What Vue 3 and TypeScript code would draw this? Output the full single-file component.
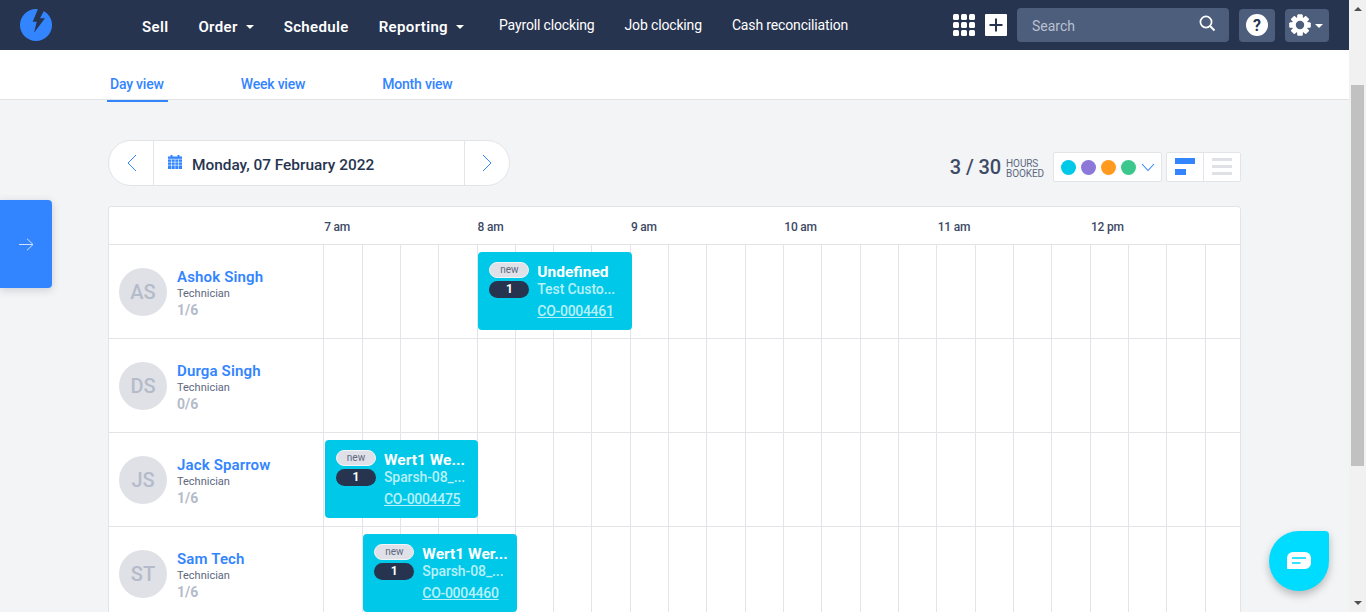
<script setup lang="ts">
interface NavItem { label: string; caret?: boolean }
interface Job { title: string; sub: string; code: string; slot: number }
interface Person { initials: string; name: string; count: string; job?: Job }

const mainNav: NavItem[] = [
  { label: 'Sell' },
  { label: 'Order', caret: true },
  { label: 'Schedule' },
  { label: 'Reporting', caret: true },
]
const subNav: string[] = ['Payroll clocking', 'Job clocking', 'Cash reconciliation']
const tabs: string[] = ['Day view', 'Week view', 'Month view']
const hours: string[] = ['7 am', '8 am', '9 am', '10 am', '11 am', '12 pm']
const legend: string[] = ['#00c8e8', '#8b78d8', '#ff9a1f', '#3cc88c']
const slots: number[] = Array.from({ length: 24 }, (_, i) => i)
const teeth: number[] = [0, 45, 90, 135, 180, 225, 270, 315]
const SLOT = 38.34

const people: Person[] = [
  { initials: 'AS', name: 'Ashok Singh', count: '1/6', job: { title: 'Undefined', sub: 'Test Custo...', code: 'CO-0004461', slot: 4 } },
  { initials: 'DS', name: 'Durga Singh', count: '0/6' },
  { initials: 'JS', name: 'Jack Sparrow', count: '1/6', job: { title: 'Wert1 We...', sub: 'Sparsh-08_...', code: 'CO-0004475', slot: 0 } },
  { initials: 'ST', name: 'Sam Tech', count: '1/6', job: { title: 'Wert1 Wer...', sub: 'Sparsh-08_...', code: 'CO-0004460', slot: 1 } },
]
const jobLeft = (slot: number): string => `${slot * SLOT + 1.8}px`
</script>

<template>
  <div class="app">
    <div class="page">
      <header class="topbar">
        <svg class="logo" width="32" height="32" viewBox="0 0 32 32">
          <circle cx="16" cy="16" r="16" fill="#3385ff" />
          <path d="M18.3 -1L12.7 12.7H16.7L14 23.7L25 9.3H20L25.5 -1Z" fill="#27344f" />
        </svg>
        <nav class="main-nav">
          <a v-for="item in mainNav" :key="item.label" class="main-link">
            {{ item.label }}<i v-if="item.caret" class="caret"></i>
          </a>
        </nav>
        <nav class="sub-nav">
          <a v-for="item in subNav" :key="item" class="sub-link">{{ item }}</a>
        </nav>
        <div class="top-tools">
          <svg width="22" height="22" viewBox="0 0 22 22" fill="#fff">
            <template v-for="r in [0, 1, 2]" :key="r">
              <rect v-for="c in [0, 1, 2]" :key="c" :x="c * 8" :y="r * 8" width="6" height="6" rx="1.5" />
            </template>
          </svg>
          <svg class="plus" width="22" height="22" viewBox="0 0 22 22">
            <rect width="22" height="22" rx="1" fill="#fff" />
            <path d="M11 4.5V17.5M4.5 11H17.5" stroke="#27344f" stroke-width="2" />
          </svg>
          <div class="search">
            <span>Search</span>
            <svg width="17" height="17" viewBox="0 0 17 17" fill="none" stroke="#fff" stroke-width="1.7">
              <circle cx="7" cy="7" r="5.6" />
              <path d="M11 11L15.5 15.5" stroke-width="2" />
            </svg>
          </div>
          <button class="tool-btn help">
            <svg width="22" height="22" viewBox="0 0 22 22">
              <circle cx="11" cy="11" r="11" fill="#fff" />
              <text x="11" y="16.5" text-anchor="middle" class="q">?</text>
            </svg>
          </button>
          <button class="tool-btn gear">
            <svg width="22" height="22" viewBox="0 0 24 24">
              <rect v-for="t in teeth" :key="t" x="9.2" y="0.5" width="5.6" height="23" rx="1" fill="#fff" :transform="`rotate(${t} 12 12)`" />
              <circle cx="12" cy="12" r="6.8" fill="none" stroke="#fff" stroke-width="4" />
              <circle cx="12" cy="12" r="4.6" fill="#4d5d7c" />
            </svg>
            <i class="caret small"></i>
          </button>
        </div>
      </header>

      <div class="tabs">
        <a v-for="(tab, i) in tabs" :key="tab" class="tab" :class="{ active: i === 0 }">{{ tab }}</a>
      </div>

      <main class="content">
        <div class="toolbar">
          <div class="date-pill">
            <button class="arrow">
              <svg width="11" height="18" viewBox="0 0 11 18" fill="none" stroke="#3385ff" stroke-width="1"><path d="M10 1L2 9L10 17" /></svg>
            </button>
            <div class="date">
              <svg width="14" height="14" viewBox="0 0 14 14">
                <rect y="1.5" width="14" height="12.5" fill="#3385ff" />
                <rect x="2.5" width="2" height="3" fill="#3385ff" />
                <rect x="9.5" width="2" height="3" fill="#3385ff" />
                <path d="M0 4.2H14M0 7.2H14M0 10.2H14M3.5 4.2V14M7 4.2V14M10.5 4.2V14" stroke="#fff" stroke-width="0.6" />
              </svg>
              <span>Monday, 07 February 2022</span>
            </div>
            <button class="arrow">
              <svg width="11" height="18" viewBox="0 0 11 18" fill="none" stroke="#3385ff" stroke-width="1"><path d="M1 1L9 9L1 17" /></svg>
            </button>
          </div>
          <div class="tools">
            <strong class="booked">3 / 30</strong>
            <span class="booked-label">HOURS<br />BOOKED</span>
            <div class="legend">
              <i v-for="c in legend" :key="c" class="dot" :style="{ background: c }"></i>
              <svg width="14" height="9" viewBox="0 0 14 9" fill="none" stroke="#3385ff" stroke-width="1.1"><path d="M1 1L7 7.5L13 1" /></svg>
            </div>
            <div class="view-toggle">
              <div class="view-btn">
                <svg width="20" height="18" viewBox="0 0 20 18" fill="#3385ff"><rect width="20" height="6" /><rect y="11" width="11" height="6" /></svg>
              </div>
              <div class="view-btn">
                <svg width="20" height="18" viewBox="0 0 20 18" fill="#e0e1e6"><rect width="20" height="3" /><rect y="7" width="20" height="3" /><rect y="14" width="20" height="3" /></svg>
              </div>
            </div>
          </div>
        </div>

        <section class="board">
          <div class="board-head">
            <div class="name-col"></div>
            <span v-for="h in hours" :key="h" class="hour">{{ h }}</span>
          </div>
          <div v-for="p in people" :key="p.initials" class="row">
            <div class="name-col person">
              <div class="avatar">{{ p.initials }}</div>
              <div class="who">
                <a class="who-name">{{ p.name }}</a>
                <span class="role">Technician</span>
                <span class="count">{{ p.count }}</span>
              </div>
            </div>
            <div class="timeline">
              <div v-for="s in slots" :key="s" class="slot"></div>
              <article v-if="p.job" class="job" :style="{ left: jobLeft(p.job.slot) }">
                <div class="pills">
                  <span class="pill-new">new</span>
                  <span class="pill-num">1</span>
                </div>
                <div class="job-text">
                  <span class="job-title">{{ p.job.title }}</span>
                  <span class="job-sub">{{ p.job.sub }}</span>
                  <a class="job-code">{{ p.job.code }}</a>
                </div>
              </article>
            </div>
          </div>
        </section>
      </main>

      <button class="side-toggle">
        <svg width="15" height="13" viewBox="0 0 15 13" fill="none" stroke="#cfe1ff" stroke-width="1"><path d="M0 6.5H14M8 0.7L14 6.5L8 12.3" /></svg>
      </button>
      <button class="chat">
        <svg width="24" height="18" viewBox="0 0 24 18">
          <path d="M6 0H18A6 6 0 0 1 24 6V11A6 6 0 0 1 18 17H1A1 1 0 0 1 0 16V6A6 6 0 0 1 6 0Z" fill="#fff" />
          <path d="M5 6H19" stroke="#00dcff" stroke-width="1.6" />
          <path d="M5 11H13.5" stroke="#00dcff" stroke-width="1.6" />
        </svg>
      </button>
    </div>

    <aside class="scrollbar">
      <i class="sb-up"></i>
      <div class="sb-track"><div class="sb-thumb"></div></div>
      <i class="sb-down"></i>
    </aside>
  </div>
</template>

<style>
html, body { margin: 0; overflow: hidden; }
</style>

<style scoped>
.app {
  display: flex;
  height: 612px;
  overflow: hidden;
  font-family: Roboto, "Liberation Sans", sans-serif;
  background: #f3f4f6;
  color: #27344f;
}
.page { flex: 1; min-width: 0; display: flex; flex-direction: column; position: relative; }
a { cursor: pointer; }
button { border: 0; padding: 0; font: inherit; }

.topbar {
  height: 50px;
  flex: none;
  background: #27344f;
  display: flex;
  align-items: center;
  padding: 0 20px;
  color: #fff;
}
.logo { flex: none; overflow: hidden; }
.main-nav { display: flex; margin-left: 90px; gap: 30px; }
.main-link { font-size: 15px; font-weight: 600; display: flex; align-items: center; letter-spacing: 0.35px; padding-top: 3px; }
.caret {
  width: 0; height: 0; margin-left: 8px; margin-top: 1px;
  border-left: 4px solid transparent;
  border-right: 4px solid transparent;
  border-top: 4px solid #fff;
}
.caret.small { margin-left: 4px; }
.sub-nav { display: flex; margin-left: 35px; gap: 30px; }
.sub-link { font-size: 14px; letter-spacing: -0.15px; color: #fff; margin-top: -1px; }
.top-tools { margin-left: auto; display: flex; align-items: center; }
.plus { margin-left: 10px; }
.search {
  margin-left: 10px;
  width: 212px;
  height: 34px;
  box-sizing: border-box;
  background: #4d5d7c;
  border-radius: 4px;
  display: flex;
  align-items: center;
  justify-content: space-between;
  padding: 0 13px 4px 15px;
  font-size: 14px;
  color: #b9c1d1;
}
.search span { margin-top: 5px; }
.tool-btn {
  height: 33px;
  background: #4d5d7c;
  border-radius: 4px;
  display: flex;
  align-items: center;
}
.help { width: 36px; margin-left: 10px; justify-content: center; }
.q { font: 700 16px Roboto, sans-serif; fill: #27344f; }
.gear { width: 44px; margin-left: 10px; padding-left: 4px; box-sizing: border-box; }

.tabs {
  height: 50px;
  flex: none;
  box-sizing: border-box;
  background: #fff;
  border-bottom: 1px solid #e3e4e8;
  display: flex;
  gap: 70px;
  padding-left: 107px;
}
.tab {
  height: 52px;
  box-sizing: border-box;
  padding: 26px 4px 0 3px;
  font-size: 14px;
  letter-spacing: -0.2px;
  font-weight: 500;
  color: #3385ff;
}
.tab.active { border-bottom: 2px solid #3385ff; }

.content { padding: 40px 108px 0; flex: 1; min-height: 0; }
.toolbar { display: flex; justify-content: space-between; align-items: flex-start; height: 46px; }
.date-pill {
  width: 402px;
  height: 46px;
  box-sizing: border-box;
  display: flex;
  background: #fff;
  border: 1px solid #e3e4e8;
  border-radius: 23px;
}
.arrow {
  width: 44px;
  flex: none;
  background: transparent;
  display: flex;
  align-items: center;
  justify-content: center;
}
.date {
  flex: 1;
  display: flex;
  align-items: center;
  gap: 10px;
  padding-left: 14px;
  border-left: 1px solid #e3e4e8;
  border-right: 1px solid #e3e4e8;
  font-size: 15.4px;
  font-weight: 500;
  color: #27344f;
}
.date span { padding-top: 3px; }
.date svg { margin-top: -2px; }
.tools { display: flex; align-items: center; height: 30px; margin-top: 12px; }
.booked { font-size: 20px; letter-spacing: -0.1px; font-weight: 500; color: #3d4a66; white-space: nowrap; }
.booked-label { font-size: 10px; letter-spacing: -0.1px; line-height: 10px; color: #5d6880; margin-left: 5px; padding-top: 3px; }
.legend {
  margin-left: 9px;
  width: 109px;
  height: 30px;
  box-sizing: border-box;
  background: #fff;
  border: 1px solid #e3e4e8;
  border-radius: 2px;
  display: flex;
  align-items: center;
  padding-left: 7px;
  gap: 5px;
}
.dot { width: 15px; height: 15px; border-radius: 50%; }
.view-toggle {
  margin-left: 4px;
  width: 75px;
  height: 30px;
  box-sizing: border-box;
  display: flex;
  background: #fff;
  border: 1px solid #e3e4e8;
  border-radius: 2px;
}
.view-btn { flex: 1; display: flex; align-items: center; justify-content: center; }
.view-btn + .view-btn { border-left: 1px solid #e3e4e8; }

.board {
  margin-top: 20px;
  background: #fff;
  border: 1px solid #e3e4e8;
  border-radius: 3px 3px 0 0;
  overflow: hidden;
}
.board-head { height: 37px; display: flex; align-items: center; }
.name-col { width: 214.2px; flex: none; box-sizing: border-box; }
.hour {
  width: 153.36px;
  flex: none;
  box-sizing: border-box;
  padding: 2px 0 0 1px;
  font-size: 12px;
  letter-spacing: -0.2px;
  font-weight: 500;
  color: #3d4a66;
}
.row { height: 94px; box-sizing: border-box; display: flex; border-top: 1px solid #e3e4e8; }
.person { display: flex; align-items: center; padding-left: 10px; gap: 10px; }
.avatar {
  width: 48px;
  height: 48px;
  flex: none;
  border-radius: 50%;
  background: #e0e1e6;
  color: #b4bbca;
  font-size: 20px;
  font-weight: 500;
  display: flex;
  align-items: center;
  justify-content: center;
}
.who { display: flex; flex-direction: column; padding-top: 4px; }
.who-name { font-size: 15px; font-weight: 600; color: #3385ff; line-height: 18px; letter-spacing: 0.15px; }
.role { font-size: 11px; color: #5d6880; line-height: 14px; margin-top: 1px; }
.count { font-size: 14px; font-weight: 700; color: #b4bbca; line-height: 18px; }
.timeline { flex: 1; display: flex; position: relative; min-width: 0; }
.slot { width: 38.34px; flex: none; box-sizing: border-box; border-left: 1px solid #e3e4e8; }
.job {
  position: absolute;
  top: 7px;
  width: 153.3px;
  height: 78px;
  box-sizing: border-box;
  padding: 10px 11px;
  display: flex;
  gap: 8px;
  background: #00c8e8;
  border-radius: 4px;
  color: #fff;
}
.pills { width: 40px; flex: none; display: flex; flex-direction: column; gap: 3px; }
.pill-new {
  height: 16px;
  box-sizing: border-box;
  border: 1px solid #f3f4f6;
  border-radius: 8px;
  background: #e0e1e8;
  color: #5d6880;
  font-size: 10px;
  line-height: 14px;
  text-align: center;
}
.pill-num {
  height: 17px;
  border-radius: 9px;
  background: #27344f;
  color: #fff;
  font-size: 12px;
  font-weight: 700;
  line-height: 17px;
  text-align: center;
}
.job-text { display: flex; flex-direction: column; min-width: 0; white-space: nowrap; padding-top: 1px; }
.job-title { font-size: 15.5px; font-weight: 700; line-height: 18px; }
.job-sub { font-size: 14px; letter-spacing: -0.1px; font-weight: 500; line-height: 17px; color: #b8f0fa; }
.job-code { font-size: 14px; letter-spacing: -0.3px; font-weight: 500; line-height: 17px; margin-top: 5px; color: #b8f0fa; text-decoration: underline; }

.side-toggle {
  position: absolute;
  left: 0;
  top: 200px;
  width: 52px;
  height: 88px;
  background: #3385ff;
  border-radius: 0 4px 4px 0;
  box-shadow: 0 2px 8px rgba(39, 52, 79, 0.2);
  display: flex;
  align-items: center;
  justify-content: center;
}
.chat {
  position: absolute;
  left: 1269px;
  top: 531px;
  width: 60px;
  height: 60px;
  background: #00dcff;
  border-radius: 50% 4px 50% 50%;
  box-shadow: 0 4px 8px rgba(0, 0, 0, 0.25);
  display: flex;
  align-items: center;
  justify-content: center;
}

.scrollbar {
  width: 17px;
  flex: none;
  background: #f1f1f1;
  display: flex;
  flex-direction: column;
  align-items: center;
}
.sb-up, .sb-down { width: 0; height: 0; flex: none; border-left: 4px solid transparent; border-right: 4px solid transparent; }
.sb-up { border-bottom: 4px solid #505050; margin: 7px 0 6px; }
.sb-down { border-top: 4px solid #505050; margin: 6px 0 7px; }
.sb-track { flex: 1; width: 100%; box-sizing: border-box; padding: 68px 2px 0 2px; }
.sb-thumb { height: 381px; background: #c1c1c1; }
</style>
